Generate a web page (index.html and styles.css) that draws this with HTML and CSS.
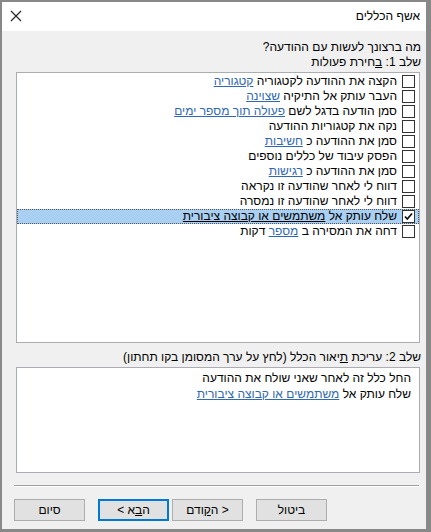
FILE: index.html
```html
<!DOCTYPE html>
<html lang="he" dir="rtl">
<head>
  <meta charset="UTF-8" />
  <title>אשף הכללים</title>
  <link rel="stylesheet" href="styles.css">
</head>
<body>
  <div class="dialog">
    <div class="titlebar">
      <span class="title">אשף הכללים</span>
      <!-- close button -->
      <svg class="close" width="12" height="12" viewBox="0 0 12 12">
        <path d="M1 1 L11 11 M11 1 L1 11" stroke="#222" stroke-width="1.1" fill="none"/>
      </svg>
    </div>

    <div class="content">
      <div class="label">מה ברצונך לעשות עם ההודעה?</div>
      <div class="label">שלב 1: <u>ב</u>חירת פעולות</div>

      <!-- Step 1: list of actions -->
      <div class="listbox" id="actions"></div>

      <div class="label step2">שלב 2: עריכת <u>ת</u>יאור הכלל (לחץ על ערך המסומן בקו תחתון)</div>
      <div class="descbox">
        <div>החל כלל זה לאחר שאני שולח את ההודעה</div>
        <div>שלח עותק אל <a href="#">משתמשים או קבוצה ציבורית</a></div>
      </div>

      <div class="separator"></div>

      <div class="buttons">
        <button class="btn cancel">ביטול</button>
        <button class="btn">&lt; ה<u>ק</u>ודם</button>
        <button class="btn default">ה<u>ב</u>א &gt;</button>
        <button class="btn finish">סיום</button>
      </div>
    </div>
  </div>

  <script>
    // actions: text before the link, link text, text after the link
    const actions = [
      { text: 'הקצה את ההודעה לקטגוריה ', link: 'קטגוריה' },
      { text: 'העבר עותק אל התיקיה ', link: 'שצוינה' },
      { text: 'סמן הודעה בדגל לשם ', link: 'פעולה תוך מספר ימים' },
      { text: 'נקה את קטגוריות ההודעה' },
      { text: 'סמן את ההודעה כ ', link: 'חשיבות' },
      { text: 'הפסק עיבוד של כללים נוספים' },
      { text: 'סמן את ההודעה כ ', link: 'רגישות' },
      { text: 'דווח לי לאחר שהודעה זו נקראה' },
      { text: 'דווח לי לאחר שהודעה זו נמסרה' },
      { text: 'שלח עותק אל ', link: 'משתמשים או קבוצה ציבורית', checked: true },
      { text: 'דחה את המסירה ב ', link: 'מספר', after: ' דקות' },
    ];

    function displayActions() {
      const list = document.getElementById('actions');
      list.innerHTML = '';

      actions.forEach((action) => {
        const row = document.createElement('div');
        row.className = action.checked ? 'row selected' : 'row';
        row.innerHTML = `
          <span class="check ${action.checked ? 'on' : ''}">${action.checked ? '<svg width="9" height="9" viewBox="0 0 9 9"><path d="M1 4.5 L3.3 7 L8 1.5" stroke="#111" stroke-width="1.8" fill="none"/></svg>' : ''}</span>
          <span class="text">${action.text}${action.link ? `<a href="#">${action.link}</a>` : ''}${action.after || ''}</span>
        `;
        list.appendChild(row);
      });
    }

    displayActions();
  </script>
</body>
</html>
```

FILE: styles.css
```css
html, body {
  margin: 0;
  height: 100%;
}

body {
  background-color: #888888;
  font-family: 'Liberation Sans', Arial, sans-serif;
  font-size: 12px;
  color: #000;
}

.dialog {
  margin: 2px 5px 0 2px;
  height: 527px;
  background-color: #f0f0f0;
  display: flex;
  flex-direction: column;
}

.titlebar {
  height: 29px;
  background-color: #fff;
  display: flex;
  align-items: center;
  justify-content: space-between;
  padding: 0 6px 0 8px;
}

.title {
  font-size: 12px;
  padding-bottom: 1px;
}

.close {
  margin-bottom: 2px;
}

.content {
  flex: 1;
  padding: 9px 5px 0 14px;
  display: flex;
  flex-direction: column;
}

.label {
  line-height: 15px;
}

.step2 {
  margin-top: 7px;
}

a {
  color: #2f68b3;
  text-decoration: underline;
}

.listbox {
  margin-top: 2px;
  height: 268px;
  background-color: #fff;
  border: 1px solid #abadb3;
  padding-top: 1px;
  margin-left: 0;
  margin-right: 1px;
}

.row {
  height: 15px;
  display: flex;
  align-items: center;
  padding-right: 4px;
  white-space: nowrap;
  box-sizing: border-box;
}

.row .text {
  line-height: 15px;
}

.row.selected {
  background-color: #a9cff2;
  outline: 1px dotted #555;
  outline-offset: -1px;
}

.row.selected a {
  color: #000;
}

.check {
  width: 11px;
  height: 11px;
  border: 1px solid #333;
  background-color: #fff;
  margin-left: 5px;
  flex-shrink: 0;
  display: flex;
  align-items: center;
  justify-content: center;
}

.descbox {
  margin-top: 2px;
  height: 96px;
  background-color: #fff;
  border: 1px solid #abadb3;
  padding: 2px 8px 6px 0;
  line-height: 16px;
  margin-right: 1px;
}

.separator {
  margin: 12px 2px 0 -2px;
  border-top: 1px solid #a0a0a0;
  border-bottom: 1px solid #fff;
}

.buttons {
  margin-top: 12px;
  display: flex;
  justify-content: flex-end;
  padding-left: 0;
  margin-left: -2px;
}

.btn {
  width: 71px;
  height: 22px;
  font-family: 'Liberation Sans', Arial, sans-serif;
  font-size: 12px;
  color: #000;
  background-color: #e1e1e1;
  border: 1px solid #adadad;
  padding: 0;
  margin-left: 3px;
}

.btn.cancel {
  margin-left: 13px;
}

.btn.default {
  border: 2px solid #0078d7;
  margin-left: 13px;
}

.btn.finish {
  margin-left: 0;
}
```
